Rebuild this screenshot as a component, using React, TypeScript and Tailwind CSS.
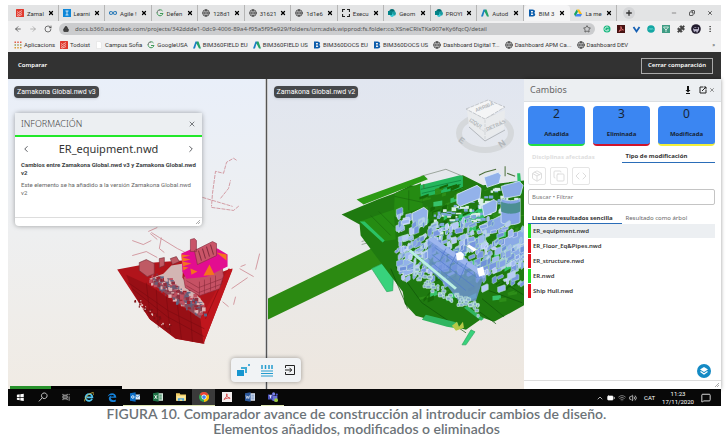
import { useState } from "react"
import type { ReactNode } from "react"
import {
  ArrowLeft,
  ArrowRight,
  Battery,
  ChevronLeft,
  ChevronRight,
  ChevronUp,
  Code,
  Copy,
  Globe,
  Lock,
  Minus,
  MoreVertical,
  Package,
  Plus,
  Puzzle,
  RotateCw,
  Star,
  Volume2,
  Wifi,
  X,
  MessageSquare,
} from "lucide-react"

type IconName = "todoist" | "learn" | "agile" | "globe" | "exec" | "share" | "autodesk" | "bim" | "drive" | "google" | "apps" | "page"

const tabs: { icon: IconName; title: string }[] = [
  { icon: "todoist", title: "Zamal" },
  { icon: "learn", title: "Learni" },
  { icon: "agile", title: "Agile !" },
  { icon: "google", title: "Defen" },
  { icon: "globe", title: "128d1" },
  { icon: "globe", title: "31621" },
  { icon: "globe", title: "1d1e6" },
  { icon: "exec", title: "Execu" },
  { icon: "share", title: "Geom" },
  { icon: "share", title: "PROYI" },
  { icon: "autodesk", title: "Autod" },
  { icon: "bim", title: "BIM 3" },
  { icon: "drive", title: "La me" },
]

const bookmarks: { icon: IconName; title: string }[] = [
  { icon: "apps", title: "Aplicacions" },
  { icon: "todoist", title: "Todoist" },
  { icon: "page", title: "Campus Sofia" },
  { icon: "google", title: "GoogleUSA" },
  { icon: "autodesk", title: "BIM360FIELD EU" },
  { icon: "autodesk", title: "BIM360FIELD US" },
  { icon: "bim", title: "BIM360DOCS EU" },
  { icon: "bim", title: "BIM360DOCS US" },
  { icon: "globe", title: "Dashboard Digital T..." },
  { icon: "globe", title: "Dashboard APM Ca..." },
  { icon: "globe", title: "Dashboard DEV" },
]

const counters = [
  { value: 2, label: "Añadida", border: "border-[#22dd44]" },
  { value: 3, label: "Eliminada", border: "border-[#d0142c]" },
  { value: 0, label: "Modificada", border: "border-[#f2f03c]" },
]

const results = [
  { name: "ER_equipment.nwd", added: true },
  { name: "ER_Floor_Eq&Pipes.nwd", added: false },
  { name: "ER_structure.nwd", added: false },
  { name: "ER.nwd", added: true },
  { name: "Ship Hull.nwd", added: false },
]

const SiteIcon = ({ name }: { name: IconName }) => {
  if (name === "globe") return <Globe className="h-2 w-2 shrink-0 text-[#555]" strokeWidth={3} aria-hidden />
  const shapes: Record<Exclude<IconName, "globe">, ReactNode> = {
    todoist: (
      <>
        <rect width="16" height="16" rx="1" fill="#e0392e" />
        <path d="M2 5l3 2 7-4M2 9l3 2 7-4M2 13l3 1 7-3" stroke="#fff" strokeWidth="1.2" fill="none" />
      </>
    ),
    learn: (
      <>
        <rect width="16" height="16" fill="#0d86d8" />
        <path d="M5 4h6M8 4v8M5 12h6" stroke="#fff" strokeWidth="1.5" />
      </>
    ),
    agile: <path d="M8 8C6 4 1 4 1 8s5 4 7 0 7-4 7 0-5 4-7 0z" stroke="#2a7ab8" strokeWidth="2.2" fill="none" />,
    exec: <path d="M6 1H1v5M10 1h5v5M6 15H1v-5M10 15h5v-5" stroke="#222" strokeWidth="2.4" fill="none" />,
    share: (
      <>
        <circle cx="8" cy="5.5" r="5.5" fill="#036c70" />
        <circle cx="11.5" cy="9" r="4.5" fill="#1a9ba1" />
        <circle cx="8" cy="12.5" r="3.5" fill="#37c6d0" />
        <rect y="4" width="8" height="8" fill="#038387" />
      </>
    ),
    autodesk: (
      <>
        <path d="M0 15L5 1h3l2 7-3-3-3 10z" fill="#1c7fc4" />
        <path d="M8 1l3 0 5 14h-4L7 5z" fill="#23a468" />
      </>
    ),
    bim: <path fillRule="evenodd" d="M2 1h7c6 0 6 6 3 7 4 1 3 7-2 7H2zM6 4v3h3c1.5 0 1.5-3 0-3zM6 9v3h3c2 0 2-3 0-3z" fill="#0b5cab" />,
    drive: (
      <>
        <path d="M5.5 1h5l5.5 9h-5z" fill="#f9bc15" />
        <path d="M5.5 1L0 10l2.5 5L8 5.5z" fill="#16a261" />
        <path d="M5 10h11l-2.5 5h-11z" fill="#4286f5" />
      </>
    ),
    google: (
      <>
        <path d="M13 4A6 6 0 1 0 14 9H8" stroke="#3e9b57" strokeWidth="2" fill="none" />
        <path d="M8 2A6 6 0 0 0 2 8" stroke="#888" strokeWidth="2" fill="none" />
      </>
    ),
    apps: (
      <>
        <path d="M1 2.5h14" stroke="#e25a47" strokeWidth="3" strokeDasharray="3 2.5" />
        <path d="M1 8h14" stroke="#9a9a55" strokeWidth="3" strokeDasharray="3 2.5" />
        <path d="M1 13.5h14" stroke="#d99c3b" strokeWidth="3" strokeDasharray="3 2.5" />
      </>
    ),
    page: <path d="M3 1h7l3 3v11H3z" fill="#fff" stroke="#ddd" />,
  }
  return (
    <svg viewBox="0 0 16 16" className="h-2 w-2 shrink-0" aria-hidden>
      {shapes[name]}
    </svg>
  )
}

const BrowserChrome = () => (
  <div className="bg-[#f0f0f1] font-[Roboto,sans-serif] text-[6px] text-[#333]">
    <div className="flex h-4 items-stretch bg-[#e3e4e5] pl-1">
      <div className="flex min-w-0 flex-1">
        {tabs.map((tab) => (
          <div
            key={tab.title}
            className={`flex min-w-0 flex-1 items-center gap-[3px] border-r pl-1 pr-1 ${
              tab.icon === "bim" ? "rounded-t border-transparent bg-[#f4f4f5]" : "border-[#b5b5b5]"
            }`}
          >
            <SiteIcon name={tab.icon} />
            <span className="flex-1 whitespace-nowrap">{tab.title}</span>
            <button type="button" aria-label={`Cerrar ${tab.title}`}>
              <X className="h-1.5 w-1.5 text-black" strokeWidth={5} />
            </button>
          </div>
        ))}
      </div>
      <div className="flex w-[104px] shrink-0 items-center justify-between pl-1.5 pr-2">
        <button type="button" aria-label="Nueva pestaña" className="mr-6 rounded-full bg-[#d5d6d8] p-0.5">
          <Plus className="h-2 w-2" strokeWidth={4} />
        </button>
        <button type="button" aria-label="Minimizar"><Minus className="h-1.5 w-1.5" /></button>
        <button type="button" aria-label="Restaurar"><Copy className="h-1.5 w-1.5 -scale-x-100" strokeWidth={3} /></button>
        <button type="button" aria-label="Cerrar"><X className="h-1.5 w-1.5" strokeWidth={3} /></button>
      </div>
    </div>

    <div className="flex h-4 items-center gap-[7px] pl-1.5 pr-1.5">
      <button type="button" aria-label="Atrás"><ArrowLeft className="h-2 w-2" /></button>
      <button type="button" aria-label="Adelante"><ArrowRight className="h-2 w-2 text-[#999]" /></button>
      <button type="button" aria-label="Recargar"><RotateCw className="h-2 w-2" /></button>
      <div className="flex h-3 min-w-0 flex-1 items-center gap-1.5 rounded-full bg-[#cbccce] px-1">
        <Lock className="h-1.5 w-1.5 fill-[#444]" strokeWidth={3} aria-hidden />
        <input
          aria-label="Dirección"
          className="min-w-0 flex-1 bg-transparent font-['Noto_Sans',sans-serif] text-[6px] text-[#555] outline-none"
          defaultValue="docs.b360.autodesk.com/projects/342ddde1-0dc9-4006-89a4-f95a5f95e929/folders/urn:adsk.wipprod:fs.folder:co.XSneCRlsTKa907eKy6fqcQ/detail"
        />
        <Star className="h-2 w-2" aria-hidden />
      </div>
      <svg viewBox="0 0 113 10" className="h-2.5 w-[113px] shrink-0" aria-hidden>
        <circle cx="5" cy="5" r="3.5" fill="#18b77f" />
        <path d="M6.5 3.8a2 2 0 1 0 .2 2h-1.5" stroke="#fff" strokeWidth=".8" fill="none" />
        <rect x="15" y="1" width="8" height="8" fill="#471212" />
        <path d="M17 7.5C19 5 19.5 3 19 2.5s0 3 2.5 3.5c-1-.5-3 0-4.5 1.5" stroke="#e77" strokeWidth=".8" fill="none" />
        <path d="M31.5 3l3 4.5 3-4.5" stroke="#1660b4" strokeWidth="1.8" fill="none" />
        <circle cx="49" cy="5" r="3.8" fill="#14a7a4" />
        <path d="M47 5.5q1-2 2 0 1-2 2 0" stroke="#b7f2ee" strokeWidth=".7" fill="none" />
        <rect x="60" y="1" width="8" height="8" fill="#3f9c84" />
        <path d="M61.5 3h5L64 6zM64 5v3" stroke="#e7f6f0" strokeWidth=".8" fill="none" />
        <circle cx="94" cy="5" r="4.8" fill="#221c2e" />
        <path d="M91 5l2-2 2 1 2-1v3l-2 3-1-2-2 1z" fill="#b9b4c9" />
        <path d="M92 4.5h4" stroke="#221c2e" strokeWidth="1.2" />
        <g transform="translate(75 1)"><Puzzle width="8" height="8" fill="#444" color="#444" /></g>
        <g transform="translate(104 1)"><MoreVertical width="8" height="8" color="#333" /></g>
      </svg>
    </div>

    <div className="flex h-[15px] items-center justify-between px-1.5">
      <nav className="flex items-center gap-[5px]">
        {bookmarks.map((bookmark) => (
          <a key={bookmark.title} href="#" className="flex items-center gap-0.5 whitespace-nowrap">
            <SiteIcon name={bookmark.icon} />
            {bookmark.title}
          </a>
        ))}
      </nav>
      <button type="button" aria-label="Más marcadores">»</button>
    </div>
  </div>
)

// small seeded generator so that the models look the same on every render
const seeded = (seed: number) => () => {
  seed = (seed * 16807) % 2147483647
  return seed / 2147483647
}

const scatter = (seed: number, count: number, place: (r: () => number) => [number, number]) => {
  const r = seeded(seed)
  return Array.from({ length: count }, () => {
    const [x, y] = place(r)
    return { x, y, a: r(), b: r(), c: r() }
  })
}

const hullParts = scatter(71, 190, (r) => {
  const t = r()
  return [152 + t * 48 + (r() - 0.5) * 10, 276 + t * 30 + (r() - 0.5) * 16]
})

const hullSpecks = scatter(29, 40, (r) => {
  const t = r()
  return [134 + t * 42, 298 + t * 34 + (r() - 0.5) * 8]
})

const deckParts = scatter(913, 170, (r) => [418 + r() * 98, 186 + r() * 112])

const equipment = scatter(4211, 330, (r) => {
  const t = r()
  return [394 + t * 126, 208 + (r() + r()) * 36 + t * 12]
})

const crane = scatter(57, 130, (r) => {
  const t = r()
  return [430 + t * 84, 214 - t * 36 + r() * 26]
})

const partColors = ["#8e3040", "#6c5a72", "#c05060", "#ddb3b4", "#5b6787", "#a0202c"]
const blues = ["#86a4e6", "#7897df", "#9fb9f0", "#6f92d8", "#b7cbf5"]

const RemovedModel = () => (
  <svg viewBox="8 79 256 309" preserveAspectRatio="xMidYMid slice" className="absolute inset-0 h-full w-full" aria-hidden>
    <g fill="none" stroke="#c77883" strokeWidth=".7">
      <path d="M236 160l-3-2-7 4-3 11-8-2-3 22-1 13M202 197l30 9M211 207l22 3 6-5M220 198l8-10 2-8" strokeDasharray="4 1" />
      <path d="M148 231l9-4M151 232l8 5 18 11 8 4M132 240l11 4 8-4M132 255l14-4 11 6M161 237l-2 11 5 4M150 233l7 6" />
      <path d="M259 253l-4 16M239 268l14 8M240 266l5-2M247 277l-16 11M235 296l-2 8M222 301l6 5" />
    </g>
    <path d="M117 269l37-7 28-2 38 12 8-3 4-1-29 75-28-5-26-20-13-20z" fill="#b1141b" />
    <path d="M126 274l22 10 52 34 4 25-28-5-26-19-17-27z" fill="#980f15" />
    <path d="M228 268l4 1-29 74-3-25z" fill="#c0161d" />
    <path d="M132 288l35 28 37 20M128 282l40 28 36 18M146 282l4 34M156 289l2 38M166 296l4 36M177 303l4 35M190 311l2 30M205 318l17-38" stroke="#74090e" strokeWidth=".5" fill="none" />
    <path d="M149 278l14-5 8-8 12-2-1 14 22 26-4 14z" fill="#d3b5b3" />
    <path d="M149 281l12-3 43 28-4 12z" fill="#8d4a58" />
    {hullParts.map((p, i) => (
      <rect key={i} x={p.x} y={p.y} width={1 + p.a * 3} height={1 + p.b * 3} fill={partColors[Math.floor(p.c * 6)]} />
    ))}
    {hullSpecks.map((p, i) => (
      <rect key={i} x={p.x} y={p.y} width={1 + p.a} height={1 + p.b} fill={p.c > 0.7 ? "#e3c5c0" : "#7c1015"} />
    ))}
    <path d="M139 262l7-3 8 4v10l-7 3-8-6zM159 258l5-1v8l-5 2zM170 258l6-2 3 5-7 3z" fill="#bf5a64" stroke="#742e38" strokeWidth=".6" />
    <path d="M183 276l38-13 2 12-4 13-20 7-14-8z" fill="#c65164" stroke="#8a2a3b" strokeWidth=".6" />
    <path d="M199 281v14M204 279v14M210 277v13M215 275v13M186 280l12 7 24-9M186 285l12 7 24-9" stroke="#8a2a3b" strokeWidth=".6" fill="none" />
    <path d="M181 253l9-4 27-1 10 6v12l-21 10-20 2-4-7z" fill="#e30d90" />
    <path d="M181 254l9 1-8 2 8 2-8 2 9 2-9 3 6 1-5 3zM203 275l6-11 5 10zM216 252l10 2v6zM196 249l6-1-4 4zM190 268l7 3-6 3z" fill="#f4731d" />
    <path d="M190 239l4-1 2 2v11h-6zM194 250l18-9 4 2v12l-19 9z" fill="#c95568" stroke="#842c3e" strokeWidth=".6" />
    <path d="M198 250l3 10M202 248l3 10M206 246l3 10M210 244l3 10" stroke="#842c3e" strokeWidth="1" />
  </svg>
)

const AddedModel = () => (
  <svg viewBox="267 79 257 309" preserveAspectRatio="xMidYMid slice" className="absolute inset-0 h-full w-full" aria-hidden>
    <path d="M267 298l114-55 24-14 10 18-28 14-120 58z" fill="#2c8a12" />
    <path d="M371 268l17-8 5 8-1 22-6 1zM470 329l4 2-9 13h-4z" fill="#38d27c" stroke="#2a9f58" strokeWidth=".6" />
    <path d="M420 176l25-7 17 7M373 203l18 8M361 241l18-5M361 244l18-5" fill="none" stroke="#8a958a" strokeWidth=".8" />
    <path d="M356 199l67-24 4 4-64 25z" fill="#2c9a14" />
    <path d="M394 193l16-8 22 2 30-12 20 10 42-5v124l-31 17-11-4-17 12-50-14-11-12-2-12-25-33-17-23-1-11-18-10 36-15z" fill="#1f7a10" />
    <path d="M394 193l26-10 2 24-29 9zM359 221l34-12 2 30-14 2z" fill="#258b12" />
    <path d="M370 215l20 20M378 211l16 16M394 196l28 6M408 190v20" stroke="#155f0a" strokeWidth=".5" fill="none" />
    <path d="M419 185l40-10 3 1v12l-42 9z" fill="#24b65c" />
    <path d="M359 221l23 21 2-2-20-19zM452 217l30-12 1 14-30 8zM516 173l3 0 2 20-4 2z" fill="#2bc266" />
    <path d="M420 189l40-9M421 193l39-9M453 221l28-11M454 224l28-11" stroke="#0f8238" strokeWidth=".8" fill="none" />
    {deckParts.map((p, i) => (
      <path
        key={i}
        d={`M${p.x} ${p.y}l${3 + p.a * 7} ${-1 - p.b * 3}v${1 + p.c * 4}l${-3 - p.a * 7} ${1 + p.b * 3}z`}
        fill={p.c > 0.85 ? "#37c26a" : p.b > 0.5 ? "#166808" : "#2d8d18"}
      />
    ))}
    <path d="M390 268l17 40M395 266l26 36 44 30M470 305l25 18M481 298l22 18M488 290l33 12M500 280l22 14" stroke="#0f5508" strokeWidth=".7" fill="none" />
    <path d="M466 305l17 13-3 2-17-13zM421 319l4-5 32 8 1 6-12-2z" fill="#30b560" />
    {crane.map((p, i) => (
      <rect key={i} x={p.x} y={p.y} width={2 + p.a * 4} height={1 + p.b * 3} fill={p.c > 0.5 ? "#d7eee6" : "#7fa8da"} />
    ))}
    <path d="M500 240l23-12v30l-14 8-9-6zM478 226l24-12 4 10-22 12zM500 186l18-5 4 4-3 10-16 3z" fill="#8aaae6" stroke="#cfe8ea" strokeWidth=".8" />
    <path d="M500 198c5 3 14 3 19 0v24c-5 3-14 3-19 0z" fill="#86a5e6" stroke="#d6eaf4" strokeWidth=".8" />
    <path d="M500 201c5 3 14 3 19 0v10c-5 3-14 3-19 0z" fill="#4c8f93" />
    <path d="M456 194l20-9 4 3-1 10-20 8-3-3zM483 177l14-5 3 3-2 8-12 4zM411 213l12-6 4 3-1 14-13 5zM397 263l8-5 9 5-1 9-8 3-8-5zM481 205l12-6 3 3-1 9-12 5z" fill="#93b2ea" stroke="#e4f1fa" strokeWidth=".8" />
    {equipment.map((p, i) => (
      <path
        key={i}
        d={`M${p.x} ${p.y}l${1 + p.a * 6} ${-1 - p.b * 2}l1 1v${1 + p.c * 5}l${-1 - p.a * 6} ${1 + p.b * 2}l-1 -1z`}
        fill={blues[i % 5]}
        stroke={p.b > 0.4 ? "#b5e8c6" : "#e6f1fb"}
        strokeWidth=".5"
      />
    ))}
    <path d="M427 239l5-2 52 35-9 28-16 2-12-16-20-18z" fill="#7395de" fillOpacity=".8" />
    <path d="M427 239l5-2 52 35-2 5z" fill="#9db6ee" />
    {equipment.slice(0, 54).map((p, i) => (
      <rect key={i} x={412 + p.a * 64} y={280 + p.a * 36 - p.b * 14} width={2 + p.c * 3} height={3} rx=".5" fill="#83a9cc" stroke="#c9f0dc" strokeWidth=".7" />
    ))}
    <path d="M434 247l42 30M431 254l42 32M431 262l34 28M445 248l-6 12M455 254l-7 14M466 262l-8 18" stroke="#5078cc" strokeWidth=".7" fill="none" />
    <path d="M408 251l46 38 2-2-46-38z" fill="#b9efe2" />
    <path d="M455 253l5-2 3 3-1 5-6 1zM468 244l8 5-3 2-7-5zM476 268l6-2 2 8-6 2z" fill="#fff" />
    <path d="M451 325l5-4 2 5 4-5 1 6-8 3z" fill="#b7c847" />
    <path d="M504 166v10M478 175l6-3 11-3M506 173l8 3M423 184v4" stroke="#4c6f3a" strokeWidth="1" fill="none" />
  </svg>
)

const ViewCube = () => (
  <svg viewBox="0 0 62 58" className="absolute right-2 top-[18px] h-[58px] w-[62px]" aria-hidden>
    <ellipse cx="31" cy="36" rx="26" ry="17" fill="none" stroke="#d5d8db" strokeWidth="6" />
    <path d="M13 13l18 9 20-9-1 19-19 11-16-14z" fill="#e9ebed" />
    <path d="M31 23v20M15 24l16 11 19-9" fill="none" stroke="#c9ccd0" strokeWidth=".7" strokeDasharray="3 1" />
    <path d="M12 12l22-9 17 7-20 12z" fill="#f4f5f6" stroke="#b9bdc2" strokeWidth=".8" strokeDasharray="4 1" />
    <path d="M15 30l16 14 20-11" fill="none" stroke="#b4b8bc" />
    <g fill="#b2b6ba" className="font-['Liberation_Sans',sans-serif] font-bold">
      <text x="22" y="15" fontSize="5" transform="rotate(-22 22 15)">ARRIBA</text>
      <text x="15" y="24" fontSize="5" transform="rotate(32 15 24)">IZQUI</text>
      <text x="33" y="34" fontSize="5" transform="rotate(-24 33 34)">DETRÁS</text>
      <text x="4" y="44" fontSize="8" transform="rotate(35 4 44)">E</text>
      <text x="47" y="51" fontSize="9" transform="rotate(-35 47 51)">N</text>
    </g>
  </svg>
)

const ModelLabel = ({ children }: { children: ReactNode }) => (
  <span className="relative ml-1.5 mt-[7px] inline-flex h-3 items-center self-start whitespace-nowrap rounded-sm bg-[#46484b] px-[3px] font-[Roboto,sans-serif] text-[7px] text-white shadow">
    {children}
  </span>
)

const InfoPanel = () => (
  <section className="relative ml-[7px] mt-[15px] w-[187px] rounded-sm bg-white text-[#3c3f44] shadow-[0_0_5px_rgba(0,0,0,0.35)]">
    <header className="flex h-6 items-center justify-between border-b-2 border-[#22e82a] bg-[#eceff2] px-1.5">
      <h2 className="text-[9px] font-light text-[#444]">INFORMACIÓN</h2>
      <button type="button" aria-label="Cerrar información"><X className="h-2 w-2" /></button>
    </header>
    <div className="flex h-6 items-center justify-between px-1.5">
      <button type="button" aria-label="Anterior"><ChevronLeft className="h-3 w-2.5" /></button>
      <h3 className="text-[11px] text-[#333]">ER_equipment.nwd</h3>
      <button type="button" aria-label="Siguiente"><ChevronRight className="h-3 w-2.5" /></button>
    </div>
    <div className="h-14 whitespace-nowrap px-1.5 font-[Roboto,sans-serif] text-[6px] leading-2">
      <p className="font-bold">
        Cambios entre Zamakona Global.nwd v3 y Zamakona Global.nwd
        <br />
        v2
      </p>
      <p className="mt-1 text-[#666]">
        Este elemento se ha añadido a la versión Zamakona Global.nwd
        <br />
        v2
      </p>
    </div>
    <footer className="flex h-[9px] items-end justify-end border-t border-[#ddd] p-0.5">
      <Grip />
    </footer>
  </section>
)

const Grip = () => (
  <svg viewBox="0 0 4 4" className="h-1 w-1" aria-hidden>
    <path d="M0 4l4-4M2 4l2-2" stroke="#888" strokeWidth=".7" />
  </svg>
)

const ViewerToolbar = () => (
  <div className="absolute bottom-[7px] left-[223px] flex h-6 w-[70px] items-center justify-around rounded-sm bg-[#f1f3f5] shadow-[0_0_4px_rgba(0,0,0,0.35)]">
    <button type="button" aria-label="Comparar modelos">
      <svg viewBox="0 0 14 14" className="h-3.5 w-3.5">
        <path d="M5 4h6v6H9V6H5z" fill="#42acd5" />
        <path d="M1 7h7v6H1z" fill="#1695cf" />
        <circle cx="13" cy="2" r="1" fill="#1695cf" />
      </svg>
    </button>
    <button type="button" aria-label="Dividir vista">
      <svg viewBox="0 0 14 14" className="h-3.5 w-3.5">
        <path d="M2 2v4M5.5 2v4M9 2v4M12 2v4" stroke="#239cce" strokeWidth="1.5" />
        <path d="M1 8h12M1 10.5h12M1 13h12" stroke="#239cce" />
      </svg>
    </button>
    <button type="button" aria-label="Salir">
      <svg viewBox="0 0 12 12" className="h-3 w-3">
        <path d="M1.5 4V1.5h9v9h-9V8M1 6h6.5M5.5 3.8L7.7 6 5.5 8.2" stroke="#222" fill="none" />
      </svg>
    </button>
  </div>
)

const ChangesPanel = () => {
  const [selected, setSelected] = useState(results[0].name)
  const [query, setQuery] = useState("")

  return (
    <aside className="flex w-[197px] shrink-0 flex-col bg-white text-[7px] text-[#333] shadow-[0_0_4px_rgba(0,0,0,0.4)]">
      <header className="flex h-[23px] items-center border-b border-[#dcdfe2] bg-[#eceff2] px-1.5">
        <h2 className="flex-1 text-[9px] text-[#666]">Cambios</h2>
        <button type="button" aria-label="Descargar" className="mr-2">
          <svg viewBox="0 0 6 8" className="h-2 w-1.5"><path d="M2 0h2v4h1.5L3 6.5.5 4H2zM1 7h4v1H1z" fill="#111" /></svg>
        </button>
        <button type="button" aria-label="Acoplar" className="mr-0.5">
          <svg viewBox="0 0 8 8" className="h-2 w-2"><path d="M4 1H1v6h6V4M3 5l4-4M4.5 1H7v2.5" stroke="#222" fill="none" /></svg>
        </button>
        <button type="button" aria-label="Cerrar cambios"><X className="h-1.5 w-1.5" /></button>
      </header>

      <div className="flex flex-1 flex-col pl-1 pr-1.5 pt-1">
        <div className="grid grid-cols-3 gap-2">
          {counters.map((counter) => (
            <button
              key={counter.label}
              type="button"
              className={`flex h-10 flex-col items-center justify-between rounded-sm border-b-2 bg-[#3b86f2] pb-1.5 pt-0.5 text-[#172536] ${counter.border}`}
            >
              <span className="text-[12px] leading-3">{counter.value}</span>
              <span className="text-[6px] font-bold leading-2">{counter.label}</span>
            </button>
          ))}
        </div>

        <div className="mt-[5px] grid h-3 grid-cols-2 text-[6px] font-bold">
          <button type="button" className="px-1 text-left text-[#dedede]">Disciplinas afectadas</button>
          <button type="button" className="border-b border-[#2a6db8] px-1 text-left">Tipo de modificación</button>
        </div>

        <div className="mt-1 flex gap-1 text-[#ddd]">
          {[Package, Copy, Code].map((Icon, i) => (
            <button key={i} type="button" disabled aria-label={`Filtro ${i + 1}`} className="flex h-[18px] w-[18px] items-center justify-center rounded-xs border border-[#e5e5e5]">
              <Icon className="h-3 w-3" />
            </button>
          ))}
        </div>

        <input
          aria-label="Buscar"
          value={query}
          onChange={(e) => setQuery(e.target.value)}
          placeholder="Buscar • Filtrar"
          className="mt-1 h-4 rounded-xs border border-[#c4c4c4] px-[3px] text-[6px] outline-none placeholder:text-[#777]"
        />

        <div className="mt-2 grid h-[11px] grid-cols-2 text-[6px]">
          <button type="button" className="border-b border-[#2a6db8] px-1 text-left font-bold">Lista de resultados sencilla</button>
          <button type="button" className="px-1 text-left text-[#666]">Resultado como árbol</button>
        </div>

        <ul className="text-[6px] font-semibold">
          {results.map((result) => (
            <li key={result.name} className={`border-b border-white ${selected === result.name ? "bg-[#eceff2]" : ""}`}>
              <button
                type="button"
                onClick={() => setSelected(result.name)}
                className={`flex h-3.5 w-full items-center border-l-3 pl-0.5 ${result.added ? "border-[#20dd20]" : "border-[#e41220]"}`}
              >
                {result.name}
              </button>
            </li>
          ))}
        </ul>

        <button type="button" aria-label="Aprender" className="mb-0.5 ml-auto mr-1 mt-auto flex h-3.5 w-3.5 items-center justify-center rounded-full bg-[#148ac4]">
          <svg viewBox="0 0 10 10" className="h-2.5 w-2.5">
            <path d="M5 1l4 2.5L5 6 1 3.5z" fill="#fff" />
            <path d="M1.5 5.5L5 8l3.5-2.5" stroke="#fff" strokeWidth="1.2" fill="none" />
          </svg>
        </button>
      </div>
      <footer className="flex h-[9px] items-end justify-end border-t border-[#ddd] p-0.5"><Grip /></footer>
    </aside>
  )
}

const taskbarApps: { name: string; running?: boolean; active?: boolean; drawing: ReactNode }[] = [
  { name: "Inicio", drawing: <path d="M3 4.5l4.500-.8V8H3zM8.500 3.500L14 2.700V8H8.500zM3 9h4.500v4.300L3 12.500zM8.500 9H14v5.200l-5.500-.8z" fill="#fff" /> },
  { name: "Buscar", drawing: <path d="M7 9L1.500 15M10 1.500a4.500 4.500 0 1 0 .1 0z" stroke="#ddd" strokeWidth="1.400" fill="none" /> },
  { name: "Vista de tareas", drawing: <path d="M3 3v2h7V3M3 13v-2h7v2M3 6.500h7v3H3zM13 3v2M13 7v7" stroke="#ccc" strokeWidth="1.200" fill="none" /> },
  {
    name: "Internet Explorer",
    drawing: (
      <>
        <path d="M13 11A5.500 5.500 0 1 1 13.500 8.500H4.500" stroke="#52c5ee" strokeWidth="2.600" fill="none" />
        <path d="M1 15C0 11 8 1 15 1c2 1 0 4 0 4" stroke="#f0cf4a" strokeWidth="1.200" fill="none" />
      </>
    ),
  },
  { name: "Edge", drawing: <path d="M1 8C2 1 14-1 15 9H6c0 4 5 5 8 3v3C7 18 2 14 3 9c1-2 3-4 5-4-4-1-6 1-7 3zM6 7h5c0-3-4-3-5 0z" fill="#1580d8" /> },
  {
    name: "Outlook",
    running: true,
    drawing: (
      <>
        <rect x="8" y="4" width="8" height="8" fill="#d8e9f8" />
        <path d="M8 5l4 3 4-3" stroke="#0a64b4" fill="none" />
        <path d="M0 2l9-1.500v15L0 14z" fill="#0a6cc4" />
        <circle cx="4.500" cy="8" r="2" stroke="#fff" strokeWidth="1.400" fill="none" />
      </>
    ),
  },
  {
    name: "Excel",
    running: true,
    drawing: (
      <>
        <rect x="8" y="2" width="8" height="12" fill="#d6eadd" />
        <path d="M10 5h4M10 8h4M10 11h4" stroke="#1e7245" strokeWidth="1.500" />
        <path d="M0 2l9-1.500v15L0 14z" fill="#1e7245" />
        <path d="M2.500 5l4 6M6.500 5l-4 6" stroke="#fff" strokeWidth="1.400" />
      </>
    ),
  },
  {
    name: "Explorador",
    running: true,
    drawing: (
      <>
        <path d="M0 2h6l1 2h9v10H0z" fill="#f3cf66" />
        <path d="M1 6h14v8H1z" fill="#fae69b" />
        <path d="M3 14v-4h10v4h-3v-2H6v2z" fill="#4ba3d8" />
      </>
    ),
  },
  {
    name: "Chrome",
    running: true,
    active: true,
    drawing: (
      <>
        <circle cx="8" cy="8" r="8" fill="#34a853" />
        <path d="M8 8L1 4a8 8 0 0 1 14 0z" fill="#ea4335" />
        <path d="M8 8l7-4a8 8 0 0 1-7 12z" fill="#fbbc05" />
        <circle cx="8" cy="8" r="4" fill="#fff" />
        <circle cx="8" cy="8" r="3" fill="#4285f4" />
      </>
    ),
  },
  {
    name: "Acrobat",
    drawing: (
      <>
        <rect width="16" height="16" fill="#f3eeee" />
        <path d="M3 12C7 9 9 4 8 3s-2 5 5 7c-2-1-7 0-10 2z" stroke="#cf2e2e" strokeWidth="1.300" fill="none" />
      </>
    ),
  },
  {
    name: "Word",
    drawing: (
      <>
        <rect x="8" y="2" width="8" height="12" fill="#e3eaf7" />
        <path d="M10 5h5M10 8h5M10 11h5" stroke="#2b579a" />
        <path d="M0 2l9-1.500v15L0 14z" fill="#2b579a" />
        <path d="M1.500 5.500l1.500 5 1.500-4 1.500 4 1.500-5" stroke="#fff" fill="none" />
      </>
    ),
  },
  {
    name: "Teams",
    running: true,
    drawing: (
      <>
        <circle cx="9" cy="3" r="2.500" fill="#7b83eb" />
        <circle cx="14" cy="4" r="1.800" fill="#5059c9" />
        <path d="M6 6h9v7l-4 2-5-2z" fill="#6a72d8" />
        <rect y="4" width="8" height="8" fill="#4b53bc" />
        <path d="M2 6h4M4 6v4" stroke="#fff" strokeWidth="1.300" />
        <circle cx="13" cy="13" r="3" fill="#9bca3e" />
      </>
    ),
  },
]

const Taskbar = () => (
  <div className="flex h-[17px] items-stretch justify-between bg-[#080808] font-[Roboto,sans-serif] text-[6px] text-white">
    <div className="flex">
      {taskbarApps.map((app) => (
        <button
          key={app.name}
          type="button"
          aria-label={app.name}
          className={`flex w-[23px] items-center justify-center border-b ${app.running ? "border-[#dce6b0]" : "border-transparent"} ${app.active ? "bg-[#3a3a3a]" : ""}`}
        >
          <svg viewBox="0 0 16 16" className="h-2.5 w-2.5">{app.drawing}</svg>
        </button>
      ))}
    </div>
    <div className="flex items-center gap-[3px] pr-2.5">
      <ChevronUp className="h-2 w-2" aria-hidden />
      <Battery className="h-2 w-2 fill-white" aria-hidden />
      <Wifi className="h-2 w-2 text-[#aaa]" aria-hidden />
      <Volume2 className="h-2 w-2" aria-hidden />
      <span className="px-1">CAT</span>
      <div className="text-center leading-2">
        <p>11:23</p>
        <p>17/11/2020</p>
      </div>
      <MessageSquare className="ml-1 h-2.5 w-2.5" aria-hidden />
    </div>
  </div>
)

export default function App() {
  return (
    <main className="flex min-h-screen flex-col bg-white pl-2 pr-1.5 pt-[5px] font-['Noto_Sans',sans-serif]">
      <BrowserChrome />
      <header className="flex h-[27px] items-center justify-between bg-[#323232] pl-2.5 pr-2 text-[6px] font-semibold text-white">
        <h1>Comparar</h1>
        <button type="button" className="h-4 border border-[#aaa] px-1.5">Cerrar comparación</button>
      </header>

      <div className="flex flex-1">
        <div className="relative flex min-w-0 flex-1">
          <div className="relative flex min-w-0 flex-1 flex-col overflow-hidden bg-linear-to-b from-[#e9eff9] via-[#eeeff0] to-[#f0ebe4]">
            <RemovedModel />
            <ModelLabel>Zamakona Global.nwd v3</ModelLabel>
            <InfoPanel />
            <div className="absolute bottom-0 left-0.5 flex h-[3px] w-28 bg-black">
              <div className="w-[41px] bg-[#28922c]" />
            </div>
          </div>
          <div className="w-[3px] border-x border-[#ccc] bg-[#555]" />
          <div className="relative flex min-w-0 flex-1 flex-col overflow-hidden bg-linear-to-b from-[#e1e6f0] via-[#e8e9ea] to-[#eee7df]">
            <AddedModel />
            <ViewCube />
            <ModelLabel>Zamakona Global.nwd v2</ModelLabel>
          </div>
          <ViewerToolbar />
        </div>
        <ChangesPanel />
      </div>

      <Taskbar />
      <p className="pb-[5px] pr-4 text-center font-['Lato',sans-serif] text-[14px] font-semibold leading-[15px] text-[#6c7378]">
        FIGURA 10. Comparador avance de construcción al introducir cambios de diseño.
        <br />
        Elementos añadidos, modificados o eliminados
      </p>
    </main>
  )
}
